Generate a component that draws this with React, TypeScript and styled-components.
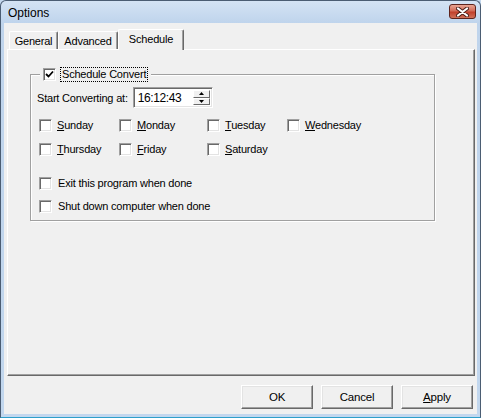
import React from 'react';
import styled, { createGlobalStyle } from 'styled-components';

const GlobalStyle = createGlobalStyle`
  html, body {
    margin: 0;
    padding: 0;
    background: #c4d8ee;
  }
  body {
    font-family: "Liberation Sans", Arial, sans-serif;
    font-size: 11px;
    letter-spacing: -0.2px;
    color: #000;
  }
`;

const Window = styled.div`
  width: 481px;
  height: 418px;
  box-sizing: border-box;
  display: flex;
  flex-direction: column;
  border: 1px solid #4b5d73;
  border-bottom-color: #2d9fcb;
  border-radius: 6px 6px 0 0;
  background: linear-gradient(#d4e3f4, #bfd4ec 22px, #c2d7ee);
`;

const TitleBar = styled.div`
  height: 22px;
  flex: none;
  display: flex;
  align-items: center;
  justify-content: space-between;
  padding: 0 4px 0 7px;
`;

const Title = styled.span`
  font-size: 12px;
  letter-spacing: 0;
  color: #000;
  padding-top: 1px;
`;

const CloseButton = styled.div`
  width: 27px;
  height: 15px;
  box-sizing: border-box;
  border: 1px solid #5e231c;
  border-radius: 3px;
  background: linear-gradient(#e9a593, #d26b58 45%, #c1402c 55%, #d0715a);
  display: flex;
  align-items: center;
  justify-content: center;
  margin-top: -1px;
`;

const Frame = styled.div`
  flex: 1;
  display: flex;
  padding: 0 3px 3px 3px;
  min-height: 0;
`;

const Client = styled.div`
  flex: 1;
  display: flex;
  flex-direction: column;
  background: #f0f0f0;
  padding: 6px 2px 5px 3px;
`;

const TabRow = styled.div`
  height: 20px;
  display: flex;
  align-items: flex-end;
  padding-left: 2px;
`;

const Tab = styled.div<{ $w: number; $active?: boolean }>`
  position: relative;
  z-index: ${(p) => (p.$active ? 2 : 1)};
  width: ${(p) => p.$w}px;
  height: ${(p) => (p.$active ? 21 : 18)}px;
  margin-bottom: ${(p) => (p.$active ? -1 : 0)}px;
  box-sizing: border-box;
  display: flex;
  align-items: center;
  justify-content: center;
  padding-bottom: ${(p) => (p.$active ? 2 : 0)}px;
  background: #f0f0f0;
  border-top: 1px solid #fff;
  border-left: 1px solid #fff;
  border-right: 1px solid #696969;
  box-shadow: inset -1px 0 0 #a0a0a0;
  border-radius: 2px 2px 0 0;
`;

const Panel = styled.div`
  flex: 1;
  box-sizing: border-box;
  border-top: 1px solid #fff;
  border-left: 1px solid #fff;
  border-right: 1px solid #696969;
  border-bottom: 1px solid #696969;
  box-shadow: inset -1px -1px 0 #a0a0a0;
  padding: 0 0 0 22px;
`;

const Group = styled.fieldset`
  width: 405px;
  height: 155px;
  box-sizing: border-box;
  margin: 16px 0 0 0;
  padding: 5px 6px 14px 6px;
  border: 1px solid #a0a0a0;
  box-shadow: inset 1px 1px 0 #fff, 1px 1px 0 #fff;
  min-width: 0;
`;

const Legend = styled.legend`
  height: 16px;
  display: flex;
  align-items: center;
  padding: 0 3px 0 3px;
  margin-left: 3px;
  background: #f0f0f0;
`;

const FocusText = styled.span`
  margin-left: 4px;
  padding: 0 1px;
  line-height: 13px;
  border: 1px dotted #000;
`;

const Box = styled.span`
  width: 13px;
  height: 13px;
  flex: none;
  box-sizing: border-box;
  display: inline-flex;
  align-items: center;
  justify-content: center;
  background: #fff;
  border-top: 1px solid #a0a0a0;
  border-left: 1px solid #a0a0a0;
  border-right: 1px solid #fff;
  border-bottom: 1px solid #fff;
  box-shadow: inset 1px 1px 0 #696969, inset -1px -1px 0 #e3e3e3;
`;

const TimeRow = styled.div`
  display: flex;
  align-items: center;
  gap: 5px;
  height: 21px;
`;

const TimeField = styled.div`
  width: 80px;
  height: 21px;
  box-sizing: border-box;
  display: flex;
  align-items: center;
  justify-content: space-between;
  background: #fff;
  border-top: 1px solid #a0a0a0;
  border-left: 1px solid #a0a0a0;
  border-right: 1px solid #fff;
  border-bottom: 1px solid #fff;
  box-shadow: inset 1px 1px 0 #696969, inset -1px -1px 0 #e3e3e3;
  padding: 2px 2px 2px 4px;
  font-size: 12px;
  letter-spacing: -0.4px;
`;

const Spinner = styled.div`
  width: 17px;
  height: 15px;
  display: flex;
  flex-direction: column;
`;

const SpinButton = styled.div`
  flex: 1;
  box-sizing: border-box;
  display: flex;
  align-items: center;
  justify-content: center;
  background: #f0f0f0;
  border-top: 1px solid #fff;
  border-left: 1px solid #fff;
  border-right: 1px solid #696969;
  border-bottom: 1px solid #696969;
`;

const DayGrid = styled.div`
  display: grid;
  grid-template-columns: 80px 88px 80px auto;
  row-gap: 8px;
  margin: 9px 0 0 2px;
`;

const Check = styled.label<{ $gap?: number }>`
  height: 16px;
  display: flex;
  align-items: center;
  gap: ${(p) => p.$gap ?? 5}px;
  white-space: nowrap;
`;

const Options = styled.div`
  display: flex;
  flex-direction: column;
  gap: 7px;
  margin: 18px 0 0 2px;
`;

const Key = styled.u`
  text-decoration: underline;
  text-underline-offset: 1px;
`;

const ButtonRow = styled.div`
  display: flex;
  justify-content: flex-end;
  gap: 8px;
  margin-top: 9px;
  padding-right: 2px;
`;

const Button = styled.div`
  width: 72px;
  height: 24px;
  box-sizing: border-box;
  display: flex;
  align-items: center;
  justify-content: center;
  background: #f0f0f0;
  border-top: 1px solid #fff;
  border-left: 1px solid #fff;
  border-right: 1px solid #696969;
  border-bottom: 1px solid #696969;
  box-shadow: inset -1px -1px 0 #a0a0a0, inset 1px 1px 0 #e3e3e3;
  font-size: 11.5px;
`;

function Arrow({ up }: { up?: boolean }) {
  return (
    <svg width="5" height="3" viewBox="0 0 5 3">
      <path d={up ? 'M2.5 0 L5 3 L0 3 Z' : 'M0 0 L5 0 L2.5 3 Z'} fill="#000" />
    </svg>
  );
}

function Label({ text, k = 0 }: { text: string; k?: number }) {
  return (
    <span>
      {text.slice(0, k)}
      <Key>{text[k]}</Key>
      {text.slice(k + 1)}
    </span>
  );
}

const days = [
  'Sunday',
  'Monday',
  'Tuesday',
  'Wednesday',
  'Thursday',
  'Friday',
  'Saturday',
];

export default function App() {
  return (
    <>
      <GlobalStyle />
      <Window>
        <TitleBar>
          <Title>Options</Title>
          <CloseButton>
            <svg width="13" height="10" viewBox="0 0 13 10">
              <path d="M2 1.5 L11 8.5 M11 1.5 L2 8.5" stroke="#4a1e18" strokeWidth="4" strokeLinecap="round" />
              <path d="M2 1.5 L11 8.5 M11 1.5 L2 8.5" stroke="#fff" strokeWidth="2.2" strokeLinecap="round" />
            </svg>
          </CloseButton>
        </TitleBar>
        <Frame>
          <Client>
            <TabRow>
              <Tab $w={49}>General</Tab>
              <Tab $w={60}>Advanced</Tab>
              <Tab $w={66} $active>
                Schedule
              </Tab>
            </TabRow>
            <Panel>
              <Group>
                <Legend>
                  <Box>
                    <svg width="9" height="9" viewBox="0 0 9 9">
                      <path d="M1 4 L3.5 6.5 L8 1.5" fill="none" stroke="#000" strokeWidth="1.8" />
                    </svg>
                  </Box>
                  <FocusText>Schedule Convert</FocusText>
                </Legend>
                <TimeRow>
                  <span>Start Converting at:</span>
                  <TimeField>
                    <span>16:12:43</span>
                    <Spinner>
                      <SpinButton>
                        <Arrow up />
                      </SpinButton>
                      <SpinButton>
                        <Arrow />
                      </SpinButton>
                    </Spinner>
                  </TimeField>
                </TimeRow>
                <DayGrid>
                  {days.map((d) => (
                    <Check key={d}>
                      <Box />
                      <Label text={d} />
                    </Check>
                  ))}
                </DayGrid>
                <Options>
                  <Check $gap={6}>
                    <Box />
                    <span>Exit this program when done</span>
                  </Check>
                  <Check $gap={6}>
                    <Box />
                    <span>Shut down computer when done</span>
                  </Check>
                </Options>
              </Group>
            </Panel>
            <ButtonRow>
              <Button>OK</Button>
              <Button>Cancel</Button>
              <Button>
                <Label text="Apply" />
              </Button>
            </ButtonRow>
          </Client>
        </Frame>
      </Window>
    </>
  );
}
